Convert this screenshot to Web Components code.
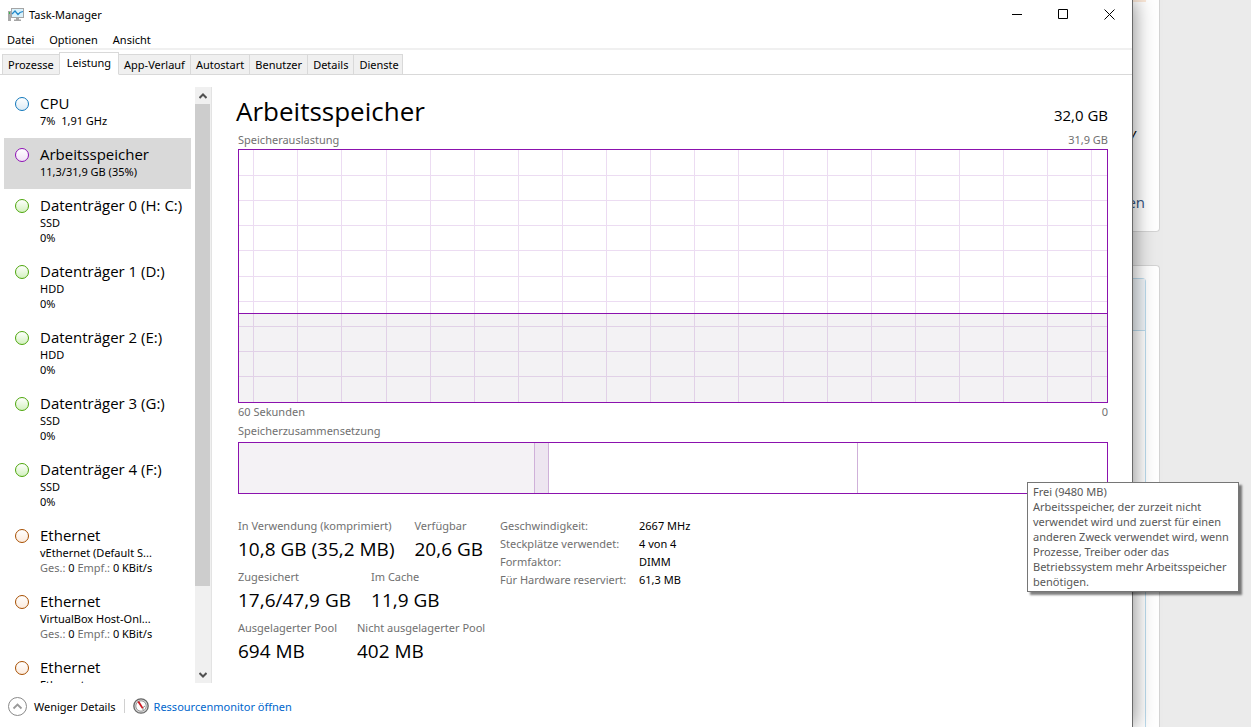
<!DOCTYPE html>
<html lang="de">
<head>
<meta charset="utf-8">
<title>Task-Manager</title>
<style>
  html, body { margin: 0; height: 100%; }
  body { font: 11px/15px "Noto Sans", "Open Sans", sans-serif; --display: "Open Sans", "Noto Sans", sans-serif; color: #000; background: #ebebeb; overflow: hidden; }
</style>
</head>
<body>
<desk-top>
  <task-window caption="Task-Manager">
    <menu-bar slot="menu"></menu-bar>
    <tab-strip slot="tabs" active="Leistung"></tab-strip>
    <resource-list slot="side"></resource-list>
    <memory-view slot="main"></memory-view>
    <status-bar slot="foot"></status-bar>
  </task-window>
  <page-behind slot="behind"></page-behind>
</desk-top>
<script>
const define = (name, html, init) => {
  customElements.define(name, class extends HTMLElement {
    constructor() {
      super();
      this.attachShadow({ mode: 'open' }).innerHTML = html;
    }
    connectedCallback() { if (init) init(this, this.shadowRoot); }
  });
};

define('desk-top', `
<style>
  :host { display: grid; grid-template-columns: minmax(0, 1fr) 118px; height: 100vh; }
</style>
<slot></slot><slot name="behind"></slot>`);

define('task-window', `
<style>
  :host { display: flex; flex-direction: column; min-width: 0; min-height: 0; background: #fff; border-right: 1px solid #6a6a6a; box-shadow: 0 0 20px rgba(0,0,0,.5); position: relative; z-index: 1; }
  header { display: flex; height: 28px; align-items: center; }
  h1 { flex: 1; margin: 0; font-size: 11px; font-weight: 400; }
  .logo { width: 16px; height: 16px; margin: 0 5px 0 8px; }
  header button { width: 46px; height: 28px; padding: 0; border: 0; background: none; display: grid; place-items: center; }
  header button svg { width: 11px; height: 11px; }
  .body { flex: 1; min-height: 0; display: grid; grid-template-columns: 212px minmax(0, 1fr); }
</style>
<header>
  <svg class="logo" viewBox="0 0 16 16" aria-hidden="true">
    <rect x="0" y="5" width="3" height="10" fill="#a9a9a9"/><rect x="1" y="6" width="1" height="2" fill="#39b54a"/>
    <rect x="3" y="2" width="13" height="10" fill="#a5a5a5"/><rect x="4" y="3" width="11" height="8" fill="#d9f1fb"/>
    <path d="M4 8 7 5l3 3.500 2-2 3-1" fill="none" stroke="#2288c9" stroke-width="1.200"/>
    <path d="M8 12h3v1.500h2V15H6v-1.500h2z" fill="#a5a5a5"/>
  </svg>
  <h1></h1>
  <button aria-label="Minimieren"><svg viewBox="0 0 11 11"><path d="M0 5.500h10" stroke="#000"/></svg></button>
  <button aria-label="Maximieren"><svg viewBox="0 0 11 11"><path d="M.5.5h9v9h-9z" fill="none" stroke="#000"/></svg></button>
  <button aria-label="Schließen"><svg viewBox="0 0 11 11"><path d="M.5.5l10 10M10.500.5l-10 10" stroke="#000"/></svg></button>
</header>
<slot name="menu"></slot>
<slot name="tabs"></slot>
<div class="body"><slot name="side"></slot><slot name="main"></slot></div>
<slot name="foot"></slot>`,
(el, root) => { root.querySelector('h1').textContent = el.getAttribute('caption'); });

define('menu-bar', `
<style>
  :host { display: block; border-bottom: 2px solid #f0f0f0; }
  nav { display: flex; gap: 15px; padding: 4px 7px 0; }
  button { font: inherit; line-height: 16px; border: 0; padding: 0; background: none; color: #000; }
</style>
<nav><button>Datei</button><button>Optionen</button><button>Ansicht</button></nav>`);

define('tab-strip', `
<style>
  :host { display: flex; align-items: flex-end; height: 25px; padding-left: 2px; box-sizing: border-box; box-shadow: inset 0 -1px #d9d9d9; }
  button { font: inherit; line-height: 19px; height: 21px; padding: 0 5px; border: 1px solid #d9d9d9; border-right-width: 0; background: #f0f0f0; color: #000; }
  button:last-child { border-right-width: 1px; padding-right: 3px; }
  button[aria-selected=true] { height: 23px; padding: 0 7px 2px; background: #fff; border-bottom-color: #fff; border-right-width: 1px; }
  button[aria-selected=true] + button { border-left-width: 0; }
</style>`,
(el, root) => {
  el.setAttribute('role', 'tablist');
  for (const t of ['Prozesse', 'Leistung', 'App-Verlauf', 'Autostart', 'Benutzer', 'Details', 'Dienste']) {
    const b = document.createElement('button');
    b.textContent = t;
    b.setAttribute('role', 'tab');
    b.setAttribute('aria-selected', t === el.getAttribute('active'));
    root.append(b);
  }
});

define('resource-item', `
<style>
  :host { display: block; --ring: #1177bb; --tint: #dcebf5; }
  :host([kind=memory]) { --ring: #8e12b5; --tint: #f1e1f6; }
  :host([kind=disk]) { --ring: #4da60c; --tint: #d3f1bf; }
  :host([kind=net]) { --ring: #a74f01; --tint: #fcebdd; }
  :host([selected]) { background: #d9d9d9; }
  button { display: grid; grid-template-columns: 14px minmax(0, 1fr); column-gap: 11px; width: 100%; padding: 6px 4px 10px 11px; border: 0; background: none; color: #000; font: inherit; text-align: left; }
  i { box-sizing: border-box; width: 14px; height: 14px; margin-top: 4px; border: 1px solid var(--ring); border-radius: 50%; background: linear-gradient(#fff, var(--tint)); }
  strong { display: block; font-family: var(--display); font-size: 15px; line-height: 20px; font-weight: 400; white-space: nowrap; }
</style>
<button><i></i><span><strong><slot name="title"></slot></strong><slot></slot></span></button>`);

define('resource-list', `
<style>
  :host { display: grid; grid-template-columns: 187px 16px; column-gap: 4px; min-height: 0; margin-top: 12px; padding-left: 4px; border-right: 1px solid #e3e3e3; box-sizing: border-box; }
  .items { overflow: hidden; min-height: 0; }
  .row { display: block; white-space: nowrap; }
  em { font-style: normal; color: #707070; }
  .bar { display: flex; flex-direction: column; background: #f0f0f0; }
  .bar button { height: 17px; width: 16px; padding: 0; border: 0; background: none; display: grid; place-items: center; }
  .bar div { flex: 1; }
  .bar .thumb { flex: 6; width: 15px; background: #cdcdcd; }
  svg { width: 8px; height: 6px; }
</style>
<div class="items"></div>
<div class="bar">
  <button aria-label="Nach oben"><svg viewBox="0 0 8 6"><path d="M.5 5 4 1.500 7.500 5" fill="none" stroke="#505050" stroke-width="2"/></svg></button>
  <div class="thumb"></div><div></div>
  <button aria-label="Nach unten"><svg viewBox="0 0 8 6"><path d="M.5 1 4 4.500 7.500 1" fill="none" stroke="#505050" stroke-width="2"/></svg></button>
</div>`,
(el, root) => {
  const rate = '<em>Ges.:</em> 0 <em>Empf.:</em> 0 KBit/s';
  const data = [
    ['cpu', 'CPU', '7%&nbsp; 1,91 GHz'],
    ['memory', 'Arbeitsspeicher', '11,3/31,9 GB (35%)'],
    ['disk', 'Datenträger 0 (H: C:)', 'SSD', '0%'],
    ['disk', 'Datenträger 1 (D:)', 'HDD', '0%'],
    ['disk', 'Datenträger 2 (E:)', 'HDD', '0%'],
    ['disk', 'Datenträger 3 (G:)', 'SSD', '0%'],
    ['disk', 'Datenträger 4 (F:)', 'SSD', '0%'],
    ['net', 'Ethernet', 'vEthernet (Default S...', rate],
    ['net', 'Ethernet', 'VirtualBox Host-Onl...', rate],
    ['net', 'Ethernet', 'Ethernet'],
  ];
  root.querySelector('.items').innerHTML = data.map(([kind, title, ...rows]) =>
    `<resource-item kind="${kind}"${kind === 'memory' ? ' selected' : ''}><span slot="title">${title}</span>${rows.map(r => `<span class="row">${r}</span>`).join('')}</resource-item>`).join('');
});

define('usage-graph', `
<style>
  :host { display: block; position: relative; border: 1px solid #8b12ae; box-sizing: border-box; min-height: 120px; }
  svg { position: absolute; inset: 0; width: 100%; height: 100%; }
</style>
<svg shape-rendering="crispEdges" role="img" aria-label="Speicherauslastung"></svg>`,
(el, root) => {
  let s = '';
  for (let i = 0; i < 20; i++) { const x = (1.7 + i * 5.082).toFixed(2) + '%'; s += `<line x1="${x}" x2="${x}" y1="0" y2="100%" stroke="#ecdcf2"/>`; }
  for (let i = 1; i < 10; i++) s += `<line y1="${i * 10}%" y2="${i * 10}%" x1="0" x2="100%" stroke="#ecdcf2"/>`;
  s += '<rect y="65%" width="100%" height="35%" fill="#5a4660" fill-opacity=".07"/><line x1="0" x2="100%" y1="65%" y2="65%" stroke="#8b12ae"/>';
  root.querySelector('svg').innerHTML = s;
});

define('memory-composition', `
<style>
  :host { display: grid; grid-template-columns: 295fr 14fr 309fr 250fr; height: 52px; border: 1px solid #8b12ae; box-sizing: border-box; }
  div + div { border-left: 1px solid #cfb0d9; }
  .used { background: #f4f2f5; }
  .modified { background: #ede5f0; }
</style>
<div class="used"></div><div class="modified"></div><div class="standby"></div><div class="free"></div>`);

define('stat-value', `
<style>
  :host { display: block; white-space: nowrap; }
  span { display: block; line-height: 18px; color: #707070; }
  strong { display: block; font-family: var(--display); font-size: 19px; line-height: 28px; font-weight: 400; }
</style>
<span></span><strong><slot></slot></strong>`,
(el, root) => { root.querySelector('span').textContent = el.getAttribute('label'); });

define('tool-tip', `
<style>
  :host { display: block; box-sizing: border-box; width: 212px; padding: 1px 4px 2px 5px; border: 1px solid #767676; background: #fff; color: #575757; box-shadow: 3px 3px 2px rgba(0,0,0,.5); }
</style>
<slot></slot>`);

define('memory-view', `
<style>
  :host { display: flex; flex-direction: column; min-width: 0; min-height: 0; padding: 16px 24px 18px 26px; box-sizing: border-box; }
  .line { display: flex; justify-content: space-between; line-height: 18px; color: #707070; }
  .head { align-items: baseline; color: #000; font-family: var(--display); }
  h2 { margin: 0 0 0 -2px; font-size: 26px; font-weight: 400; line-height: 40px; }
  .head span { font-size: 15px; }
  .name { line-height: 20px; }
  usage-graph { flex: 1; }
  .comp { position: relative; margin-top: 1px; }
  tool-tip { position: absolute; left: calc(100% - 81px); top: 40px; z-index: 2; }
  .stats { display: flex; margin-top: 23px; }
  .values { display: grid; gap: 5px; width: 262px; }
  .values div { display: flex; gap: 20px; }
  table { border-collapse: collapse; align-self: flex-start; }
  th, td { padding: 0; font-weight: 400; text-align: left; line-height: 18px; white-space: nowrap; }
  th { width: 139px; color: #707070; }
</style>
<div class="line head"><h2>Arbeitsspeicher</h2><span>32,0 GB</span></div>
<div class="line"><span>Speicherauslastung</span><span>31,9 GB</span></div>
<usage-graph></usage-graph>
<div class="line"><span>60 Sekunden</span><span>0</span></div>
<div class="line name"><span>Speicherzusammensetzung</span></div>
<div class="comp">
  <memory-composition></memory-composition>
  <tool-tip role="tooltip">Frei (9480 MB)<br>Arbeitsspeicher, der zurzeit nicht verwendet wird und zuerst für einen anderen Zweck verwendet wird, wenn Prozesse, Treiber oder das Betriebssystem mehr Arbeitsspeicher benötigen.</tool-tip>
</div>
<div class="stats">
  <div class="values">
    <div><stat-value label="In Verwendung (komprimiert)">10,8 GB (35,2 MB)</stat-value><stat-value label="Verfügbar">20,6 GB</stat-value></div>
    <div><stat-value label="Zugesichert">17,6/47,9 GB</stat-value><stat-value label="Im Cache">11,9 GB</stat-value></div>
    <div><stat-value label="Ausgelagerter Pool">694 MB</stat-value><stat-value label="Nicht ausgelagerter Pool">402 MB</stat-value></div>
  </div>
  <table>
    <tr><th scope="row">Geschwindigkeit:</th><td>2667 MHz</td></tr>
    <tr><th scope="row">Steckplätze verwendet:</th><td>4 von 4</td></tr>
    <tr><th scope="row">Formfaktor:</th><td>DIMM</td></tr>
    <tr><th scope="row">Für Hardware reserviert:</th><td>61,3 MB</td></tr>
  </table>
</div>`);

define('status-bar', `
<style>
  :host { display: flex; align-items: center; height: 44px; padding: 2px 8px 0 7px; box-sizing: border-box; }
  button { display: flex; align-items: center; gap: 6px; padding: 0; border: 0; background: none; font: inherit; color: #000; }
  button svg { width: 21px; height: 21px; }
  hr { width: 1px; height: 14px; margin: 0 8px; border: 0; background: #d0d0d0; }
  a { display: flex; align-items: center; gap: 5px; color: #0066cc; text-decoration: none; }
  a svg { width: 16px; height: 16px; }
</style>
<button><svg viewBox="0 0 21 21"><circle cx="10.500" cy="10.500" r="9" fill="#fff" stroke="#8a8a8a"/><path d="M6.500 12.500l4-4 4 4" fill="none" stroke="#9a9a9a" stroke-width="1.800"/></svg>Weniger Details</button>
<hr>
<a href="#"><svg viewBox="0 0 16 16"><circle cx="8" cy="8" r="7.200" fill="#d8d8d8" stroke="#686868" stroke-width="1.300"/><circle cx="8" cy="8" r="5.200" fill="#fff" stroke="#999"/><path d="M10 12V9.500L12 8" fill="none" stroke="#888"/><path d="M4.300 3.700l2-.4 4 6.400-1.300 1z" fill="#cf1820"/></svg>Ressourcenmonitor öffnen</a>`);

define('page-behind', `
<style>
  :host { display: flex; flex-direction: column; align-items: flex-start; gap: 33px; overflow: hidden; font-family: var(--display); font-size: 15px; line-height: 20px; }
  section { box-sizing: border-box; width: 27px; background: #fff; border: 1px solid #d4d4d4; border-left: 0; overflow: hidden; }
  .first { height: 232px; border-top: 0; border-radius: 0 0 4px 0; display: flex; flex-direction: column; }
  .second { flex: 1; border-bottom: 0; border-radius: 0 4px 0 0; padding-top: 12px; display: flex; }
  .note { width: 13px; height: 2px; background: #fbe8d8; }
  p { margin: 0; display: flex; justify-content: flex-end; }
  .name { width: 3px; margin-top: 121px; font-style: italic; }
  .more { width: 12px; margin-top: 49px; color: #33557f; }
  .panel { box-sizing: border-box; width: 13px; border: 1px solid #bcdcee; border-width: 1px 1px 0 0; border-radius: 0 4px 0 0; }
  .panel div { height: 51px; background: #f0f5f9; border-bottom: 1px solid #bcdcee; }
</style>
<section class="first"><div class="note"></div><p class="name">y</p><p class="more">en</p></section>
<section class="second"><div class="panel"><div></div></div></section>`);
</script>
</body>
</html>
